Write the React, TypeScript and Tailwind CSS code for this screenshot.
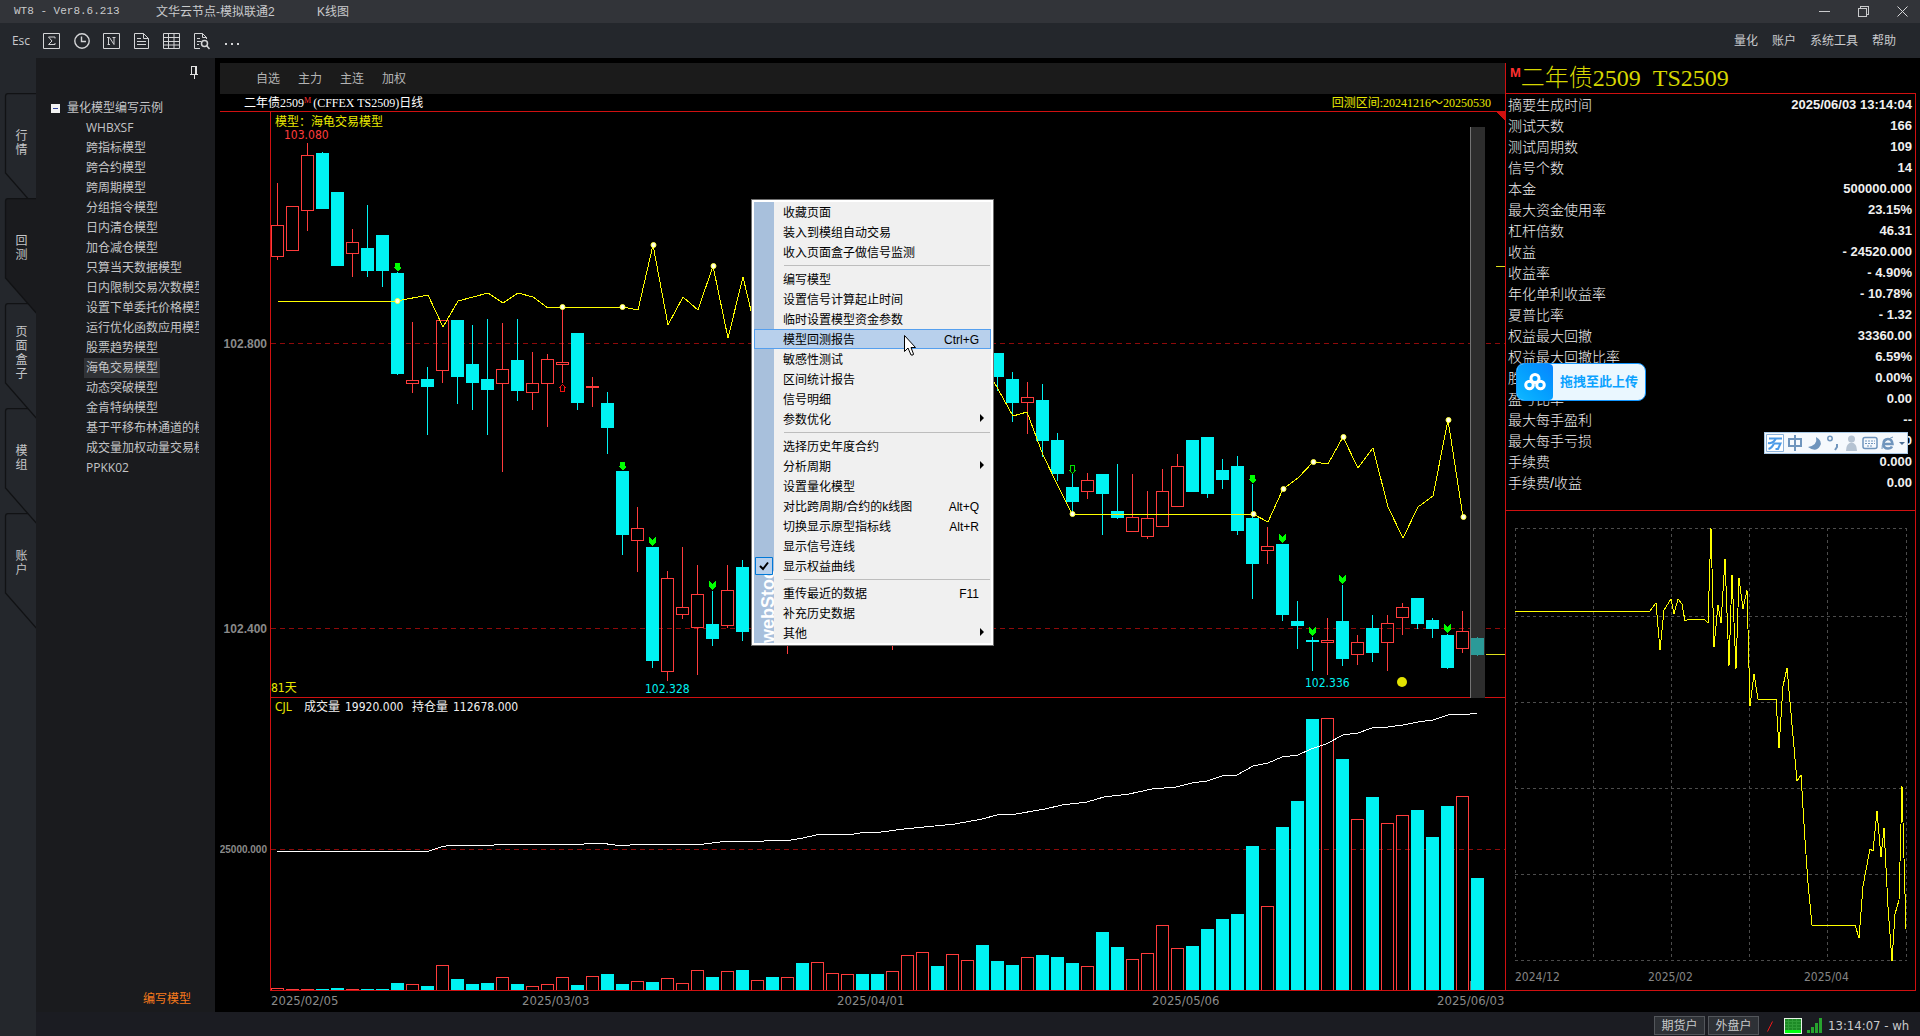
import { ReactNode } from "react";
import clsx from "clsx";

// [rising, high, body top, body bottom, low, volume top]
type Bar = [number, number, number, number, number, number];

const BARS: Bar[] = [
    [1, 183, 225, 257, 260, 988],
    [1, 206, 206, 251, 251, 989],
    [1, 143, 155, 211, 231, 989],
    [0, 152, 153, 209, 209, 989],
    [0, 192, 192, 266, 266, 988],
    [1, 229, 242, 254, 277, 989],
    [0, 205, 248, 271, 277, 989],
    [0, 235, 235, 271, 287, 989],
    [0, 272, 273, 374, 375, 983],
    [1, 322, 380, 384, 393, 984],
    [0, 367, 379, 387, 435, 986],
    [1, 320, 320, 371, 383, 965],
    [0, 320, 320, 377, 404, 979],
    [0, 325, 364, 383, 410, 984],
    [0, 319, 379, 390, 435, 983],
    [1, 323, 369, 384, 472, 977],
    [0, 319, 360, 391, 401, 984],
    [1, 352, 383, 393, 410, 986],
    [1, 354, 359, 384, 427, 984],
    [1, 308, 362, 365, 383, 977],
    [0, 333, 333, 403, 410, 985],
    [1, 377, 386, 388, 407, 976],
    [0, 392, 403, 428, 454, 974],
    [0, 471, 471, 535, 555, 984],
    [1, 507, 528, 541, 572, 981],
    [0, 547, 547, 661, 668, 982],
    [1, 571, 578, 672, 681, 978],
    [1, 547, 607, 615, 619, 983],
    [1, 565, 594, 628, 675, 970],
    [0, 591, 624, 639, 646, 977],
    [1, 565, 590, 626, 628, 971],
    [0, 560, 567, 632, 641, 970],
    [1, 560, 580, 620, 630, 980],
    [0, 570, 585, 625, 636, 977],
    [1, 580, 600, 630, 654, 977],
    [0, 540, 560, 610, 620, 963],
    [1, 520, 540, 590, 600, 962],
    [1, 500, 520, 560, 580, 973],
    [1, 480, 500, 540, 560, 974],
    [0, 500, 510, 560, 580, 974],
    [0, 520, 540, 600, 620, 974],
    [1, 540, 560, 620, 650, 971],
    [1, 460, 480, 540, 560, 955],
    [1, 400, 420, 480, 500, 952],
    [0, 380, 400, 450, 470, 966],
    [1, 350, 370, 420, 440, 954],
    [1, 320, 340, 380, 400, 960],
    [0, 320, 335, 370, 385, 945],
    [0, 353, 353, 377, 391, 961],
    [0, 372, 379, 403, 422, 965],
    [1, 382, 397, 403, 434, 957],
    [0, 384, 400, 441, 457, 955],
    [0, 433, 440, 474, 481, 957],
    [0, 474, 487, 502, 514, 963],
    [1, 473, 480, 492, 499, 966],
    [0, 474, 474, 494, 535, 932],
    [0, 464, 511, 518, 519, 947],
    [1, 474, 517, 532, 532, 959],
    [1, 491, 518, 537, 539, 953],
    [1, 469, 491, 527, 527, 925],
    [1, 454, 466, 507, 507, 948],
    [0, 440, 440, 492, 492, 946],
    [0, 437, 437, 494, 498, 929],
    [0, 459, 470, 480, 489, 919],
    [0, 456, 466, 531, 535, 914],
    [0, 484, 518, 564, 599, 846],
    [1, 527, 546, 551, 564, 906],
    [0, 544, 544, 615, 621, 827],
    [0, 601, 621, 626, 649, 801],
    [0, 637, 640, 642, 671, 719],
    [1, 618, 640, 643, 675, 718],
    [0, 585, 621, 659, 666, 759],
    [1, 635, 642, 655, 665, 819],
    [0, 615, 628, 653, 662, 797],
    [1, 615, 623, 643, 671, 823],
    [1, 603, 607, 618, 635, 815],
    [0, 598, 598, 624, 629, 810],
    [0, 618, 620, 629, 638, 837],
    [0, 634, 635, 668, 669, 806],
    [1, 611, 631, 649, 653, 796],
    [0, 637, 638, 655, 656, 878],
];

const EQUITY_LEFT =
    "278,301 397,301 428,295 443,327 458,301 488,293 503,303 518,293 533,297 548,308 562,307 623,307 638,310 653,245 668,325 683,297 698,310 713,266 728,338 743,277 758,340";
const EQUITY_RIGHT =
    "983,364 994,382 998,389 1013,416 1027,412 1043,455 1058,486 1072,514 1253,514 1268,522 1283,489 1298,478 1313,462 1328,464 1343,437 1358,468 1373,448 1388,507 1403,538 1418,507 1433,496 1448,420 1463,517";
const EQUITY_DOTS = [
    [397, 301], [562, 307], [622, 307], [653, 245], [713, 266], [1072, 514], [1253, 514],
    [1283, 489], [1313, 462], [1343, 437], [1448, 420], [1463, 517],
];
const OPEN_INTEREST =
    "277,851 429,851 441,847 451,845 494,845 495,844 584,844 585,843 600,843 615,845 630,845 631,844 704,844 720,842 736,841 764,841 766,840 791,840 803,838 816,835 827,834 854,834 860,833 881,832 904,829 955,824 982,819 997,815 1016,814 1045,809 1062,805 1087,802 1104,797 1129,794 1152,789 1176,787 1192,783 1207,781 1222,776 1237,775 1253,766 1268,763 1282,757 1298,755 1311,749 1326,744 1343,735 1358,733 1372,728 1388,727 1403,725 1418,722 1433,720 1448,715 1470,714 1477,713";
const SUMMARY_CURVE =
    "1515,611 1650,611 1656,603 1660,650 1664,610 1671,599 1674,614 1678,599 1682,604 1685,621 1689,619 1704,619 1708,623 1711,528 1714,647 1718,605 1721,623 1725,559 1729,666 1732,575 1736,669 1739,578 1743,609 1747,590 1750,706 1754,674 1758,699 1776,699 1779,748 1783,686 1787,668 1797,781 1801,775 1805,840 1808,883 1812,925 1815,925 1855,925 1859,938 1863,886 1870,849 1873,851 1877,811 1881,857 1884,828 1888,907 1892,961 1895,914 1899,900 1902,786 1906,929";

// short entries and adds: [bar, top y]
const DOWN_ARROWS = [[8, 263], [23, 462], [65, 475]];
const CHEVRONS = [[25, 537], [29, 581], [67, 534], [69, 627], [71, 575], [78, 624]];

const MODELS = [
    "WHBXSF", "跨指标模型", "跨合约模型", "跨周期模型", "分组指令模型", "日内清仓模型",
    "加仓减仓模型", "只算当天数据模型", "日内限制交易次数模型", "设置下单委托价格模型",
    "运行优化函数应用模型", "股票趋势模型", "海龟交易模型", "动态突破模型", "金肯特纳模型",
    "基于平移布林通道的模型", "成交量加权动量交易模型", "PPKK02",
];

const RAIL = ["行情", "回测", "页面盒子", "模组", "账户"];

const SUMMARY = [
    ["摘要生成时间", "2025/06/03 13:14:04"],
    ["测试天数", "166"],
    ["测试周期数", "109"],
    ["信号个数", "14"],
    ["本金", "500000.000"],
    ["最大资金使用率", "23.15%"],
    ["杠杆倍数", "46.31"],
    ["收益", "- 24520.000"],
    ["收益率", "- 4.90%"],
    ["年化单利收益率", "- 10.78%"],
    ["夏普比率", "- 1.32"],
    ["权益最大回撤", "33360.00"],
    ["权益最大回撤比率", "6.59%"],
    ["胜率", "0.00%"],
    ["盈亏比率", "0.00"],
    ["最大每手盈利", "--"],
    ["最大每手亏损", "0.00"],
    ["手续费", "0.000"],
    ["手续费/收益", "0.00"],
];

interface MenuEntry {
    label: string;
    keys?: string;
    sub?: boolean;
    checked?: boolean;
    active?: boolean;
}

const MENU: MenuEntry[][] = [
    [{ label: "收藏页面" }, { label: "装入到模组自动交易" }, { label: "收入页面盒子做信号监测" }],
    [
        { label: "编写模型" },
        { label: "设置信号计算起止时间" },
        { label: "临时设置模型资金参数" },
        { label: "模型回测报告", keys: "Ctrl+G", active: true },
        { label: "敏感性测试" },
        { label: "区间统计报告" },
        { label: "信号明细" },
        { label: "参数优化", sub: true },
    ],
    [
        { label: "选择历史年度合约" },
        { label: "分析周期", sub: true },
        { label: "设置量化模型" },
        { label: "对比跨周期/合约的k线图", keys: "Alt+Q" },
        { label: "切换显示原型指标线", keys: "Alt+R" },
        { label: "显示信号连线" },
        { label: "显示权益曲线", checked: true },
    ],
    [{ label: "重传最近的数据", keys: "F11" }, { label: "补充历史数据" }, { label: "其他", sub: true }],
];

const barX = (i: number) => 277 + i * 15;

const TitleBar = () => (
    <header className="flex h-[23px] items-center bg-[#323439] pl-[14px] text-xs text-[#c9cacc]">
        <span className="w-[142px] font-['Liberation_Mono',monospace] text-[11px] whitespace-pre">
            WT8 - Ver8.6.213
        </span>
        <span className="w-[161px]">文华云节点-模拟联通2</span>
        <span>K线图</span>
        <div className="ml-auto flex items-center gap-[28px] pr-3">
            <button type="button" aria-label="最小化">
                <svg width="11" height="11" stroke="#c9cacc" shapeRendering="crispEdges">
                    <path d="M0 5.5H11" />
                </svg>
            </button>
            <button type="button" aria-label="还原">
                <svg width="11" height="11" fill="none" stroke="#c9cacc" shapeRendering="crispEdges">
                    <path d="M.5 2.5H8.5V10.5H.5ZM2.5 2.5V.5H10.5V8.5H8.5" />
                </svg>
            </button>
            <button type="button" aria-label="关闭">
                <svg width="11" height="11" stroke="#d6d7d9">
                    <path d="M.5.5 10.5 10.5M10.5.5.5 10.5" />
                </svg>
            </button>
        </div>
    </header>
);

const ToolIcon = ({ label, children }: { label: string; children: ReactNode }) => (
    <button type="button" aria-label={label}>
        <svg width="18" height="18" fill="none" stroke="#d4d5d7" className="block">
            {children}
        </svg>
    </button>
);

const Toolbar = () => (
    <div className="flex h-[35px] items-center bg-[#24272c] pr-6 pl-[11px] text-xs text-[#c9cacc]">
        <button type="button" className="mr-3 w-5 font-['Open_Sans',sans-serif]">
            Esc
        </button>
        <div className="flex items-center gap-3">
            <ToolIcon label="合约统计">
                <path d="M.5 1.5H16.5V16.5H.5Z" />
                <path d="M12 6.5V5H5.5L9 9 5.5 12.5H12V11" />
            </ToolIcon>
            <ToolIcon label="分时">
                <circle cx="9" cy="9" r="7.2" strokeWidth="1.4" />
                <path d="M8.5 4.5V9.5H13" strokeWidth="1.4" />
            </ToolIcon>
            <ToolIcon label="新闻">
                <path d="M.5 1.5H16.5V16.5H.5Z" />
                <path d="M4.5 12.5H7M5.5 12.5V5.5M4 5.5H6.5L11 12.5V5.5M9.5 5.5H12.5" />
            </ToolIcon>
            <ToolIcon label="文档">
                <path d="M1.5 1.5H10.5L15.5 6.5V16.5H1.5ZM10.5 1.5V6.5H15.5M4 6.5H8M4 9.5H13M4 12.5H13" />
            </ToolIcon>
            <ToolIcon label="报价表">
                <path d="M.5 1.5H16.5V16.5H.5ZM.5 5.5H16.5M.5 9.5H16.5M.5 13H16.5M5.5 1.5V16.5M11 1.5V16.5" />
            </ToolIcon>
            <ToolIcon label="查找">
                <path d="M7 16.5H1.5V1.5H9.5L13.5 5.5V7M9.5 1.5V5.5H13.5M4 6.5H7M4 9.5H8M4 12.5H6" />
                <circle cx="11.5" cy="11.5" r="3" strokeWidth="1.5" />
                <path d="M13.5 13.5 16.5 17" strokeWidth="1.5" />
            </ToolIcon>
            <button type="button" aria-label="更多">
                <svg width="18" height="18" fill="#d4d5d7" className="block">
                    <path d="M2 11h2v2H2ZM8 11h2v2H8ZM14 11h2v2H14Z" />
                </svg>
            </button>
        </div>
        <nav className="ml-auto flex gap-[14px]">
            {["量化", "账户", "系统工具", "帮助"].map((item) => (
                <button key={item} type="button">
                    {item}
                </button>
            ))}
        </nav>
    </div>
);

const Rail = () => (
    <nav className="isolate flex w-9 shrink-0 flex-col bg-[#24272c] pt-[35px] text-xs leading-[14px] text-[#c4c5c7]">
        {RAIL.map((tab, i) => {
            const active = tab === "回测";
            return (
                <button
                    key={tab}
                    type="button"
                    className={clsx(
                        "relative flex h-[105px] items-center justify-center pb-1.5 pl-[7px]",
                        active && "z-20",
                        i === 2 && "z-10",
                        i === 3 && "z-[5]",
                    )}
                >
                    <svg
                        className="absolute top-0 left-0"
                        width="36"
                        height="116"
                        fill={active ? "#1a1b1e" : "#24272c"}
                        stroke="#111214"
                        strokeWidth="1.3"
                    >
                        <path d="M37 .7H8Q5.5 .7 5.5 3.5V80L37 116" />
                    </svg>
                    <span className="relative w-3 break-all">{tab}</span>
                </button>
            );
        })}
    </nav>
);

const Sidebar = () => (
    <aside className="flex w-[179px] shrink-0 flex-col bg-[#1a1b1e] text-xs leading-5 text-[#c4c5c7]">
        <div className="flex h-10 justify-end pt-2 pr-4">
            <button type="button" aria-label="固定" className="self-start">
                <svg width="10" height="13" fill="none" stroke="#e0e0e0" shapeRendering="crispEdges">
                    <path d="M2.5 0V8M2 .5H8M6.5 0V8M7.5 0V8M1 8.5H9M5 9V13" />
                </svg>
            </button>
        </div>
        <div className="flex items-center pl-[15px]">
            <svg width="9" height="9" className="mr-[7px]">
                <path d="M0 0H9V9H0Z" fill="#f2f2f2" />
                <path d="M2 4H7V5H2Z" fill="#31439c" />
            </svg>
            <span>量化模型编写示例</span>
        </div>
        <ul className="mr-4 ml-12 overflow-hidden">
            {MODELS.map((name) => (
                <li key={name} className="flex">
                    <button
                        type="button"
                        className={clsx(
                            "px-0.5 font-['Open_Sans','Noto_Sans_CJK_SC',sans-serif] whitespace-nowrap",
                            name === "海龟交易模型" && "bg-[#303236]",
                        )}
                    >
                        {name}
                    </button>
                </li>
            ))}
        </ul>
        <button type="button" className="mt-auto mr-6 mb-[3px] self-end text-[#f77a1c]">
            编写模型
        </button>
    </aside>
);

const KLineChart = () => (
    <svg viewBox="220 111 1285 901" className="block h-auto w-full" fontSize="12">
        <g shapeRendering="crispEdges" fill="none">
            <path d="M271 343.5H1505M271 628.5H1505M271 849.5H1505" stroke="#8e0a0a" strokeDasharray="5 4" />
            <path d="M220 111.5H1505M270.5 111V991M271 697.5H1505M271 990.5H1505" stroke="#d01010" />
            <path d="M1470 127H1485V698H1470Z" fill="#2d2d2d" />
            <path d="M1470.5 127V698M1470.5 981V990" stroke="#747474" />

            {BARS.map(([up, high, top, bottom, low, vol], i) => {
                const x = barX(i);
                const color = up ? "#ff3c3c" : i === BARS.length - 1 ? "#2b9a98" : "#00f3f3";
                return up ? (
                    <g key={i} stroke={color}>
                        <path d={`M${x + 0.5} ${high}V${top}M${x + 0.5} ${bottom}V${low}`} />
                        <rect x={x - 5.5} y={top + 0.5} width="12" height={bottom - top - 1} />
                        <path d={`M${x - 5.5} 990V${vol + 0.5}H${x + 6.5}V990`} />
                    </g>
                ) : (
                    <g key={i} fill={color}>
                        <rect x={x} y={high} width="1" height={low - high} />
                        <rect x={x - 6} y={top} width="13" height={bottom - top} />
                        <rect x={x - 6} y={vol} width="13" height={990 - vol} fill="#00f3f3" />
                    </g>
                );
            })}

            <g stroke="#ffff00">
                <polyline points={EQUITY_LEFT} />
                <polyline points={EQUITY_RIGHT} />
                <path d="M1486 654.5H1505M1496 266.5H1505" stroke="#dede1c" />
            </g>
            <polyline points={OPEN_INTEREST} stroke="#ffffff" />
            <path d="M1496 112H1505V121Z" fill="#d01010" />
            <path d="M1070.5 465.5H1074.5V470.5H1075.5L1072.5 473.5 1069.5 470.5H1070.5Z" stroke="#00e000" />
            <path d="M560.5 391.5H564.5V387.5H565.5L562.5 384.5 559.5 387.5H560.5Z" stroke="#f01010" />
        </g>

        {EQUITY_DOTS.map(([x, y]) => (
            <circle key={x} cx={x + 0.5} cy={y} r="2.5" fill="#fffff0" stroke="#ffff3c" />
        ))}
        <g fill="#00ff00" shapeRendering="crispEdges">
            {DOWN_ARROWS.map(([i, y]) => (
                <path key={i} d={`M${barX(i) - 2} ${y}h5v4h1v1l-3 3h-1l-3 -3v-1h1z`} />
            ))}
            {CHEVRONS.map(([i, y]) => (
                <path key={i} d={`M${barX(i) - 3} ${y}l3.5 3l3.5 -3v6l-3.5 3l-3.5 -3z`} />
            ))}
        </g>
        <circle cx="1402" cy="682" r="5" fill="#e2e200" />

        <g className="font-['DejaVu_Sans_Condensed','Noto_Sans','Noto_Sans_CJK_SC',sans-serif]">
            <text x="275" y="126" fill="#e8e800">模型：海龟交易模型</text>
            <text x="284" y="139" fill="#ff3c3c">103.080</text>
            <text x="645" y="693" fill="#00f3f3">102.328</text>
            <text x="1305" y="687" fill="#00f3f3">102.336</text>
            <text x="271" y="692" fill="#e8e800">81天</text>
            <text x="275" y="711" fill="#e8e800">CJL</text>
            <text x="304" y="711" fill="#f0f0f0">成交量</text>
            <text x="345" y="711" fill="#f0f0f0">19920.000</text>
            <text x="412" y="711" fill="#f0f0f0">持仓量</text>
            <text x="453" y="711" fill="#f0f0f0">112678.000</text>
            <g fill="#8a8a8a" fontSize="13">
                <text x="271" y="1005">2025/02/05</text>
                <text x="522" y="1005">2025/03/03</text>
                <text x="837" y="1005">2025/04/01</text>
                <text x="1152" y="1005">2025/05/06</text>
                <text x="1437" y="1005">2025/06/03</text>
            </g>
        </g>
        <g fill="#8a8a8a" fontWeight="bold" textAnchor="end" className="font-['Liberation_Sans',sans-serif]">
            <text x="267" y="348">102.800</text>
            <text x="267" y="633">102.400</text>
            <text x="267" y="853" fontSize="10">25000.000</text>
        </g>
    </svg>
);

const SummaryChart = () => (
    <svg viewBox="1506 511 409 479" className="block h-auto w-full" shapeRendering="crispEdges" fill="none">
        <path
            d="M1515.5 528V961M1593.5 528V961M1671.5 528V961M1749.5 528V961M1827.5 528V961M1906.5 528V961M1515 528.5H1906M1515 616.5H1906M1515 702.5H1906M1515 788.5H1906M1515 874.5H1906M1515 960.5H1906"
            stroke="#4c4c4c"
            strokeDasharray="3 3"
        />
        <polyline points={SUMMARY_CURVE} stroke="#ffff00" />
        <g fill="#858585" fontSize="12" className="font-['DejaVu_Sans_Condensed','Noto_Sans',sans-serif]">
            <text x="1515" y="981">2024/12</text>
            <text x="1648" y="981">2025/02</text>
            <text x="1804" y="981">2025/04</text>
        </g>
    </svg>
);

const SummaryPanel = () => (
    <aside className="flex w-[415px] shrink-0 flex-col pt-[5px]">
        <h1 className="flex h-[30px] items-center border-l border-[#d01010] pl-1 font-['Liberation_Serif','Noto_Sans_CJK_SC',serif] text-2xl leading-[30px] font-light whitespace-pre text-[#d6d600]">
            <sup className="top-0 self-start pt-[3px] font-['Liberation_Sans',sans-serif] text-[13px] leading-[14px] font-bold text-[#ff3030]">
                M
            </sup>
            二年债2509  TS2509
        </h1>
        <div className="mr-1 border border-[#d01010]">
            <table className="mb-[17px] w-full text-sm text-[#f0f0f0]">
                <tbody>
                    {SUMMARY.map(([name, value]) => (
                        <tr key={name} className="h-[21px]">
                            <th className="p-0 pl-0.5 text-left leading-5 font-light">{name}</th>
                            <td className="p-0 pr-[3px] text-right font-['Liberation_Sans',sans-serif] text-[13px] leading-5 font-bold">
                                {value}
                            </td>
                        </tr>
                    ))}
                </tbody>
            </table>
            <div className="border-t border-[#d01010]">
                <SummaryChart />
            </div>
        </div>
    </aside>
);

const ContextMenu = () => (
    <div
        role="menu"
        className="absolute top-[199px] left-[751px] flex w-[243px] border border-[#6e6e6e] bg-[#f0f0f0] text-xs text-black"
    >
        <div className="pointer-events-none absolute inset-0 border-2 border-white" />
        <div className="my-0.5 ml-0.5 flex w-5 items-start overflow-hidden bg-[#a8c0dc]">
            <span className="mt-auto h-[68px] rotate-180 text-lg leading-7 font-bold text-white [writing-mode:vertical-rl]">
                webStoc
            </span>
        </div>
        <div className="my-0.5 mr-0.5 flex-1">
            {MENU.map((group, g) => (
                <div key={g}>
                    {g > 0 && <hr className="my-[3px] mr-px ml-[10px] border-[#bdbdbd]" />}
                    {group.map((item) => (
                        <button
                            key={item.label}
                            type="button"
                            role="menuitem"
                            className={clsx(
                                "relative -ml-5 flex h-5 w-[237px] items-center pt-0.5 pl-[29px]",
                                item.active && "bg-[#b8d0ec] outline outline-1 -outline-offset-1 outline-[#559fee]",
                            )}
                        >
                            {item.checked && (
                                <svg className="absolute top-px left-px" width="18" height="18" fill="none">
                                    <path d="M.5.5H17.5V17.5H.5Z" fill="#b8d0ec" stroke="#0078d7" />
                                    <path d="M5 9 8 12 13 5.5" stroke="#000" strokeWidth="2" />
                                </svg>
                            )}
                            <span>{item.label}</span>
                            {item.keys && (
                                <span className="ml-auto pr-3 font-['Liberation_Sans',sans-serif]">{item.keys}</span>
                            )}
                            {item.sub && (
                                <svg className="mr-[7px] mb-1 ml-auto" width="4" height="8">
                                    <path d="M0 0 4 4 0 8Z" />
                                </svg>
                            )}
                        </button>
                    ))}
                </div>
            ))}
        </div>
        <svg className="absolute top-[135px] left-[152px]" width="12" height="21">
            <path d="M.5.5V16.5L4 13 7 20H9L9.5 19 7 12.5H11.5Z" fill="#fff" stroke="#000" />
        </svg>
    </div>
);

const UploadBadge = () => (
    <button
        type="button"
        className="absolute top-[363px] right-[274px] flex h-[38px] w-[130px] items-center overflow-hidden rounded-lg border border-[#1296ff] bg-[#eaf7ff]"
    >
        <span className="flex h-full w-9 items-center justify-center rounded-r-sm bg-gradient-to-tr from-[#10b8ff] to-[#0a84ff]">
            <svg width="22" height="20" fill="none" stroke="#fff" strokeWidth="3">
                <circle cx="11" cy="6.5" r="4" />
                <circle cx="5.5" cy="13" r="3.8" />
                <circle cx="16.5" cy="13" r="3.8" />
            </svg>
        </span>
        <span className="flex-1 text-center text-[13px] font-bold text-[#0aa2ff]">拖拽至此上传</span>
    </button>
);

const ImeBar = () => (
    <div className="absolute top-[432px] right-3 flex h-[22px] w-36 items-center border border-[#a9c9e6] bg-[#f5f9fd]">
        <svg width="142" height="20" fill="none" stroke="#6f95bd" strokeWidth="2">
            <path d="M1.5 1.5H18.5V18.5H1.5Z" fill="#fff" stroke="#8db4dc" strokeWidth="1" />
            <path d="M4 5.5H17M3 10Q8 11 11 5.5M9 10.5H15.5L13 16H10.5M9 10.5Q7 15 3.5 16" stroke="#4c9be8" />
            <path d="M24 6H36V13H24ZM30 2V18" />
            <path d="M51 4Q53 12 43 14Q51 20 55 13Q58 8 51 4Z" fill="#6f95bd" stroke="none" />
            <circle cx="65" cy="5.5" r="2.2" strokeWidth="1.5" />
            <path d="M72 11V14L70 17" />
            <path d="M81 18Q81 10 86.5 9.5Q92 10 92 18Z" fill="#b5c3d2" stroke="none" />
            <circle cx="86.5" cy="6" r="3.5" fill="#b5c3d2" stroke="none" />
            <rect x="98" y="4.5" width="14" height="11" rx="2" strokeWidth="1.5" />
            <path d="M100 8H110M100 10.5H110M102 13H108" strokeWidth="1" strokeDasharray="2 1" />
            <path d="M118.5 11H127.5Q127 6 123 6Q118.5 6 118.5 11Q118.5 15.5 123 15.5Q126 15.5 127 13.5" strokeWidth="2.5" />
            <path d="M117 16Q116 8 128 4" strokeWidth="1" />
            <path d="M134 9H140L137 12Z" fill="#4d6f95" stroke="none" />
        </svg>
    </div>
);

const StatusBar = () => (
    <footer className="flex h-6 items-center justify-end bg-[#1b1c22] pr-3 text-xs text-[#c9cacc]">
        <div className="flex gap-[3px] pt-[3px]">
            {["期货户", "外盘户"].map((name) => (
                <button key={name} type="button" className="h-[19px] w-[51px] border border-[#53565b] bg-[#2e3136] leading-4">
                    {name}
                </button>
            ))}
        </div>
        <svg className="mt-1 ml-2" width="6" height="11" stroke="#f01818">
            <path d="M.5 10.5 5.5 .5" />
        </svg>
        <svg className="mt-1 ml-[11px]" width="18" height="16" shapeRendering="crispEdges">
            <path d="M0 0H18V16H0Z" fill="#e8f5e8" />
            <path d="M1 1H17V12H1Z" fill="#1d8a26" />
            <path
                d="M1 3.5H17M1 6.5H17M1 9.5H17M4.5 1V12M8.5 1V12M12.5 1V12"
                stroke="#2f9d37"
            />
            <path d="M1 12H17V15H1Z" fill="#00ff10" />
        </svg>
        <svg className="mt-0.5 ml-[5px]" width="16" height="15" fill="#27a32e">
            <path d="M0 12h3v3H0ZM4 9h3v6H4ZM8 5h3v10H8ZM12 0h3v15H12Z" />
        </svg>
        <span className="mt-1 ml-[5px] w-20 font-['DejaVu_Sans_Condensed','Noto_Sans',sans-serif] text-[13px] whitespace-nowrap">
            13:14:07 - wh
        </span>
    </footer>
);

export default function App() {
    return (
        <div className="relative flex min-h-screen flex-col bg-black font-['Liberation_Sans','Noto_Sans_CJK_SC',sans-serif]">
            <TitleBar />
            <Toolbar />
            <div className="flex flex-1">
                <Rail />
                <div className="flex min-w-0 flex-1 flex-col">
                    <div className="flex flex-1">
                        <Sidebar />
                        <main className="min-w-0 flex-1 pt-[5px] pl-[5px]">
                            <nav className="flex h-[31px] items-center gap-[18px] bg-[#1b1b1b] pl-9 text-xs text-[#b4b4b4]">
                                {["自选", "主力", "主连", "加权"].map((tab) => (
                                    <button key={tab} type="button">
                                        {tab}
                                    </button>
                                ))}
                            </nav>
                            <div className="flex h-[17px] justify-between pr-[14px] pl-6 font-['Liberation_Serif','Noto_Sans_CJK_SC',serif] text-xs leading-[18px]">
                                <span className="flex text-white">
                                    二年债2509
                                    <span className="text-[8px] leading-[13px] text-[#ff3030]">M</span>
                                    <span className="pl-0.5">(CFFEX TS2509)日线</span>
                                </span>
                                <span className="text-[#e8e800]">回测区间:20241216～20250530</span>
                            </div>
                            <KLineChart />
                        </main>
                        <SummaryPanel />
                    </div>
                    <StatusBar />
                </div>
            </div>
            <ContextMenu />
            <UploadBadge />
            <ImeBar />
        </div>
    );
}
